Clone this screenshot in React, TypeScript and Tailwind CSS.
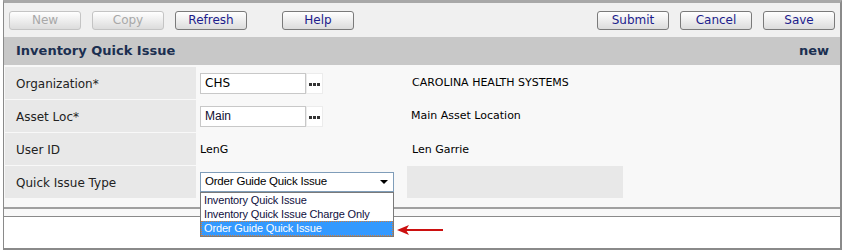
import React from 'react'

// toolbar buttons, left and right groups
const leftButtons = [
  { label: 'New', disabled: true },
  { label: 'Copy', disabled: true },
  { label: 'Refresh', disabled: false },
]
const rightButtons = ['Submit', 'Cancel', 'Save']

const issueTypes = [
  'Inventory Quick Issue',
  'Inventory Quick Issue Charge Only',
  'Order Guide Quick Issue',
]

const verdana = "font-['DejaVu_Sans',Verdana,sans-serif]"
const tahoma = "font-['Liberation_Sans',Tahoma,Arial,sans-serif]"

function ToolButton({ label, disabled }: { label: string; disabled?: boolean }) {
  return (
    <div
      className={`flex h-[19px] w-[72px] items-center justify-center rounded-[3px] border bg-gradient-to-b from-white to-[#dcdcdc] text-[12px] ${verdana} ${
        disabled ? 'border-[#c4c4c4] text-[#a8a8a8]' : 'border-[#7a7a7a] text-[#1c1c8c]'
      }`}
    >
      {label}
    </div>
  )
}

function LookupDots() {
  return (
    <div className="flex h-[21px] w-[17px] items-center justify-center gap-[1px] border border-[#ececec] bg-white pt-[3px]">
      <span className="h-[3px] w-[3px] bg-[#333]" />
      <span className="h-[3px] w-[3px] bg-[#333]" />
      <span className="h-[3px] w-[3px] bg-[#333]" />
    </div>
  )
}

function Row({ label, children, extra }: { label: string; children: React.ReactNode; extra?: React.ReactNode }) {
  return (
    <div className="flex h-[32px]">
      <div className={`flex w-[191px] items-center bg-[#e8e8e8] pt-[2px] pl-[11px] text-[12px] text-[#222] ${verdana}`}>{label}</div>
      <div className="flex w-[211px] items-center pl-[4px]">{children}</div>
      <div className={`flex flex-1 items-center text-[11px] text-black ${verdana}`}>{extra}</div>
    </div>
  )
}

export default function App() {
  return (
    <div className="relative h-[250px] w-[843px] bg-white pl-[3px] pr-[1px]">
      <div className="flex h-[250px] flex-col border-t-[3px] border-r-2 border-b-2 border-l border-t-[#a8a8a8] border-r-[#8a8a8a] border-b-[#8a8a8a] border-l-[#8a8a8a]">
        {/* toolbar */}
        <div className="flex h-[34px] items-center bg-[#f0f0f0] px-[5px]">
          <div className="flex gap-[11px]">
            {leftButtons.map((b) => (
              <ToolButton key={b.label} label={b.label} disabled={b.disabled} />
            ))}
          </div>
          <div className="ml-[35px]">
            <ToolButton label="Help" />
          </div>
          <div className="ml-auto flex gap-[11px]">
            {rightButtons.map((b) => (
              <ToolButton key={b} label={b} />
            ))}
          </div>
        </div>

        {/* title bar */}
        <div className={`flex h-[28px] items-center justify-between bg-[#c8c8c8] pl-[12px] pr-[11px] text-[13px] font-bold text-[#1b2f50] ${verdana}`}>
          <span>Inventory Quick Issue</span>
          <span>new</span>
        </div>

        {/* form */}
        <div className="flex flex-col gap-[1px] bg-[#f8f8f8] pt-[2px] pb-[9px] pl-[1px]">
          <Row label="Organization*" extra={<span className="pl-[5px]">CAROLINA HEALTH SYSTEMS</span>}>
            <div className={`flex h-[21px] w-[106px] items-center border border-[#c8c8c8] bg-white pl-[4px] text-[12px] ${verdana}`}>CHS</div>
            <LookupDots />
          </Row>
          <Row label="Asset Loc*" extra={<span className="pl-[4px]">Main Asset Location</span>}>
            <div className={`flex h-[21px] w-[106px] items-center border border-[#c8c8c8] bg-white pl-[4px] text-[12px] text-[#101030] ${tahoma}`}>Main</div>
            <LookupDots />
          </Row>
          <Row label="User ID" extra={<span className="pt-[2px] pl-[5px]">Len Garrie</span>}>
            <span className={`pt-[2px] text-[11px] ${verdana}`}>LenG</span>
          </Row>
          <Row
            label="Quick Issue Type"
            extra={<div className="h-[32px] w-[216px] bg-[#e8e8e8]" />}
          >
            <div className="relative">
              <div className={`flex h-[20px] w-[194px] items-center justify-between border border-[#7f9db9] bg-white pr-[5px] pl-[4px] text-[11.5px] tracking-[-0.2px] text-black ${tahoma}`}>
                <span>{issueTypes[2]}</span>
                <span className="h-0 w-0 border-x-[4px] border-t-[4px] border-x-transparent border-t-black" />
              </div>
              <div className={`absolute top-[20px] left-0 z-10 flex w-[194px] flex-col border border-[#7a7a7a] bg-white text-[11px] tracking-[-0.15px] text-[#101040] ${tahoma}`}>
                {issueTypes.map((t, i) =>
                  i === 2 ? (
                    <div key={t} className="flex h-[15px] items-center border border-dotted border-[#d08040] bg-[#3399ff] pl-[2px] text-white">
                      {t}
                    </div>
                  ) : (
                    <div key={t} className="flex h-[14px] items-center pl-[3px]">
                      {t}
                    </div>
                  )
                )}
              </div>
            </div>
          </Row>
        </div>

        <div className="h-[2px] bg-[#a0a0a0]" />
        <div className="h-[7px] bg-[#f8f8f8]" />
        <div className="h-[1px] bg-[#8a8a8a]" />
        <div className="flex-1 bg-white" />
      </div>

      {/* red pointer arrow */}
      <svg className="absolute top-[224px] left-[396px]" width="50" height="12" viewBox="0 0 50 12">
        <line x1="8" y1="6" x2="47" y2="6" stroke="#cc1010" strokeWidth="2" />
        <polygon points="1,6 13,1 10,6 13,11" fill="#cc1010" />
      </svg>
    </div>
  )
}
